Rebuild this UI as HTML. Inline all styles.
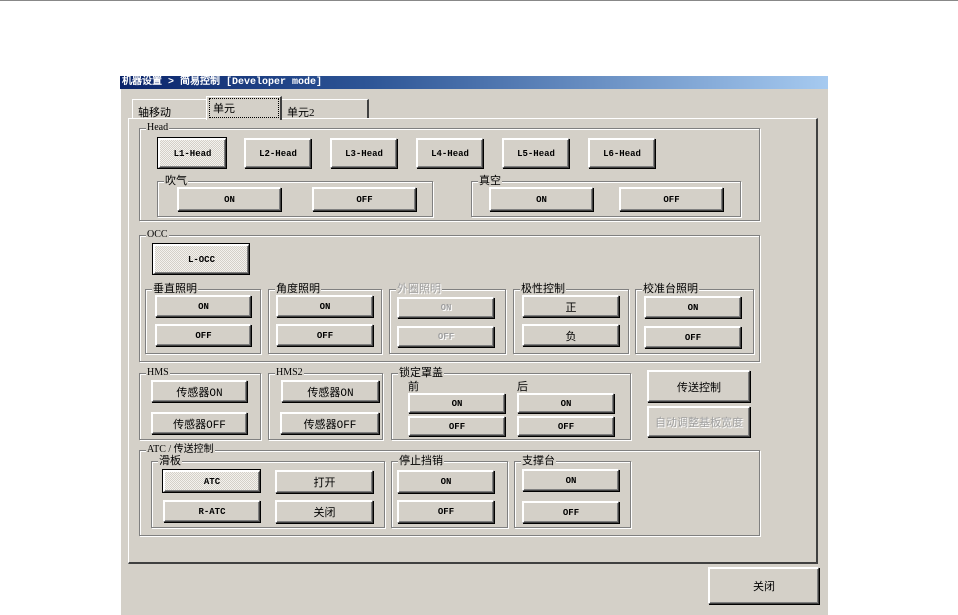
<!DOCTYPE html>
<html><head><meta charset="utf-8"><style>
body{margin:0;width:958px;height:615px;background:#fff;position:relative;overflow:hidden;font-family:"Liberation Serif","WenQuanYi Zen Hei","Noto Sans CJK SC",serif;font-size:10px;color:#000}
div{position:absolute;box-sizing:border-box}
.win{left:120px;top:75px;width:708px;height:540px;background:#d4d0c8;border-left:1px solid #fff;border-top:1px solid #fff}
.title{left:120px;top:76px;width:708px;height:13px;background:linear-gradient(90deg,#0a246a,#2d5596 35%,#a6caf0);color:#fff;font-weight:bold;font-size:10px;line-height:13px;padding-left:2px;font-family:"Liberation Mono","WenQuanYi Zen Hei",monospace}
.g{border:1px solid #808080;box-shadow:1px 1px 0 #fff, inset 1px 1px 0 #fff}
.gl{top:-7px;left:6px;background:#d4d0c8;padding:0 1px;line-height:12px;font-size:10px;white-space:nowrap}
.b{background:#d4d0c8;border-top:2px solid #fff;border-left:2px solid #fff;border-right:1px solid #404040;border-bottom:1px solid #404040;box-shadow:inset -1px -1px 0 #808080,1px 1px 0 #000;display:flex;align-items:center;justify-content:center;font-size:9px;font-weight:bold;font-family:"Liberation Mono","WenQuanYi Zen Hei",monospace}
.f{outline:1px solid #000;background-color:#e6e4e0;background-image:repeating-conic-gradient(#d4d0c8 0 25%,#f4f2ee 0 50%);background-size:2px 2px}
.d{color:#a0a0a0;text-shadow:1px 1px 0 #fff}
.cj{font-size:11px;font-weight:normal}
.tab{top:96px;height:23px;border-top:1px solid #fff;border-left:1px solid #fff;border-right:2px solid #404040;padding:4px 0 0 5px;font-size:11px}
</style></head><body>
<div style="left:0;top:0;width:958px;height:1px;background:#888"></div>
<div class="win"></div>
<div class="title">机器设置 &gt; 简易控制 [Developer mode]</div>
<div class="tab" style="left:132px;width:76px;top:99px;height:20px">轴移动</div>
<div class="tab" style="left:281px;width:88px;top:99px;height:20px">单元2</div>
<div style="left:128px;top:118px;width:690px;height:446px;border-top:1px solid #fff;border-left:1px solid #fff;border-right:2px solid #404040;border-bottom:2px solid #404040"></div>
<div class="tab" style="left:206px;width:76px;height:24px;background:#d4d0c8;border-right:2px solid #404040;padding:0"><div style="left:2px;top:1px;width:70px;height:20px;border:1px dotted #000;padding:1px 0 0 3px">单元</div></div>

<!-- Head -->
<div class="g" style="left:139px;top:128px;width:621px;height:93px"><div class="gl">Head</div></div>
<div class="b f" style="left:158px;top:138px;width:68px;height:30px">L1-Head</div>
<div class="b" style="left:244px;top:138px;width:67px;height:30px">L2-Head</div>
<div class="b" style="left:330px;top:138px;width:67px;height:30px">L3-Head</div>
<div class="b" style="left:416px;top:138px;width:67px;height:30px">L4-Head</div>
<div class="b" style="left:502px;top:138px;width:67px;height:30px">L5-Head</div>
<div class="b" style="left:588px;top:138px;width:67px;height:30px">L6-Head</div>
<div class="g" style="left:157px;top:181px;width:276px;height:36px"><div class="gl cj">吹气</div></div>
<div class="b" style="left:177px;top:187px;width:104px;height:24px">ON</div>
<div class="b" style="left:312px;top:187px;width:104px;height:24px">OFF</div>
<div class="g" style="left:471px;top:181px;width:270px;height:36px"><div class="gl cj">真空</div></div>
<div class="b" style="left:489px;top:187px;width:104px;height:24px">ON</div>
<div class="b" style="left:619px;top:187px;width:104px;height:24px">OFF</div>

<!-- OCC -->
<div class="g" style="left:139px;top:235px;width:621px;height:127px"><div class="gl">OCC</div></div>
<div class="b f" style="left:153px;top:244px;width:96px;height:30px">L-OCC</div>
<div class="g" style="left:145px;top:289px;width:116px;height:65px"><div class="gl cj">垂直照明</div></div>
<div class="b" style="left:155px;top:295px;width:96px;height:22px">ON</div>
<div class="b" style="left:155px;top:324px;width:96px;height:22px">OFF</div>
<div class="g" style="left:268px;top:289px;width:114px;height:65px"><div class="gl cj">角度照明</div></div>
<div class="b" style="left:276px;top:295px;width:97px;height:22px">ON</div>
<div class="b" style="left:276px;top:324px;width:97px;height:22px">OFF</div>
<div class="g" style="left:389px;top:289px;width:117px;height:65px"><div class="gl cj d">外圈照明</div></div>
<div class="b d" style="left:397px;top:297px;width:97px;height:21px">ON</div>
<div class="b d" style="left:397px;top:326px;width:97px;height:21px">OFF</div>
<div class="g" style="left:513px;top:289px;width:116px;height:65px"><div class="gl cj">极性控制</div></div>
<div class="b cj" style="left:522px;top:295px;width:97px;height:22px">正</div>
<div class="b cj" style="left:522px;top:324px;width:97px;height:22px">负</div>
<div class="g" style="left:635px;top:289px;width:119px;height:65px"><div class="gl cj">校准台照明</div></div>
<div class="b" style="left:644px;top:296px;width:97px;height:22px">ON</div>
<div class="b" style="left:644px;top:326px;width:97px;height:22px">OFF</div>

<!-- HMS -->
<div class="g" style="left:139px;top:373px;width:122px;height:67px"><div class="gl">HMS</div></div>
<div class="b cj" style="left:151px;top:380px;width:96px;height:22px">传感器ON</div>
<div class="b cj" style="left:151px;top:412px;width:96px;height:22px">传感器OFF</div>
<div class="g" style="left:268px;top:373px;width:115px;height:67px"><div class="gl">HMS2</div></div>
<div class="b cj" style="left:281px;top:380px;width:98px;height:22px">传感器ON</div>
<div class="b cj" style="left:280px;top:412px;width:99px;height:22px">传感器OFF</div>
<div class="g" style="left:391px;top:373px;width:240px;height:67px"><div class="gl cj">锁定罩盖</div></div>
<div class="cj" style="left:408px;top:378px;font-size:11px">前</div>
<div class="cj" style="left:517px;top:378px;font-size:11px">后</div>
<div class="b" style="left:408px;top:393px;width:97px;height:20px">ON</div>
<div class="b" style="left:408px;top:416px;width:97px;height:20px">OFF</div>
<div class="b" style="left:517px;top:393px;width:97px;height:20px">ON</div>
<div class="b" style="left:517px;top:416px;width:97px;height:20px">OFF</div>
<div class="b cj" style="left:647px;top:370px;width:103px;height:32px">传送控制</div>
<div class="b cj d" style="left:647px;top:406px;width:103px;height:31px">自动调整基板宽度</div>

<!-- ATC -->
<div class="g" style="left:139px;top:450px;width:621px;height:86px"><div class="gl">ATC / 传送控制</div></div>
<div class="g" style="left:151px;top:461px;width:234px;height:67px"><div class="gl cj">滑板</div></div>
<div class="b f" style="left:163px;top:470px;width:97px;height:22px">ATC</div>
<div class="b cj" style="left:275px;top:470px;width:98px;height:23px">打开</div>
<div class="b" style="left:163px;top:500px;width:97px;height:22px">R-ATC</div>
<div class="b cj" style="left:275px;top:500px;width:98px;height:23px">关闭</div>
<div class="g" style="left:391px;top:461px;width:117px;height:67px"><div class="gl cj">停止挡销</div></div>
<div class="b" style="left:397px;top:470px;width:97px;height:23px">ON</div>
<div class="b" style="left:397px;top:500px;width:97px;height:23px">OFF</div>
<div class="g" style="left:514px;top:461px;width:117px;height:67px"><div class="gl cj">支撑台</div></div>
<div class="b" style="left:522px;top:469px;width:97px;height:22px">ON</div>
<div class="b" style="left:522px;top:501px;width:97px;height:22px">OFF</div>

<div class="b cj" style="left:708px;top:567px;width:111px;height:37px">关闭</div>
</body></html>
